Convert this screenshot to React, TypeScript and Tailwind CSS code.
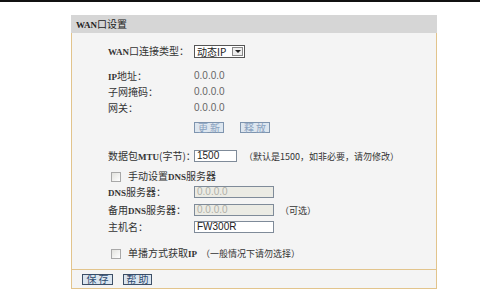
import React from 'react'

const cjk = { fontFamily: '"Noto Sans CJK SC", "Liberation Sans", sans-serif' }
const latin = { fontFamily: '"Liberation Sans", Arial, sans-serif' }
const serif = { fontFamily: '"Liberation Serif", "Times New Roman", serif' }

// Latin runs inside the Chinese labels look like a small bitmap face in the original
function Mixed({ text }: { text: string }) {
  return (
    <>
      {text.split(/([A-Za-z]+)/).map((part, i) =>
        /^[A-Za-z]+$/.test(part) ? (
          <span key={i} style={serif} className="text-[9px] font-bold">
            {part}
          </span>
        ) : (
          <span key={i}>{part}</span>
        ),
      )}
    </>
  )
}

function Label({ text }: { text: string }) {
  return (
    <div className="w-[86px] shrink-0 whitespace-nowrap text-[10px] leading-none text-[#333]">
      <Mixed text={text} />
    </div>
  )
}

function TextBox({ value, disabled, width = 'w-[80px]' }: { value: string; disabled?: boolean; width?: string }) {
  return (
    <div
      style={latin}
      className={
        width +
        ' h-[12px] whitespace-nowrap border border-[#7f8b99] px-[2px] text-[10px] leading-[10px] ' +
        (disabled ? 'bg-[#ebebe4] text-[#b0b0a8]' : 'bg-white text-[#222]')
      }
    >
      {value}
    </div>
  )
}

function CheckBox() {
  return <div className="h-[10px] w-[10px] shrink-0 border border-[#a8a8a8] bg-gradient-to-br from-[#e2e2de] to-white" />
}

function Btn({ text, muted }: { text: string; muted?: boolean }) {
  return (
    <div
      className={
        'flex h-[11px] items-center justify-center whitespace-nowrap border pl-[2px] text-[10px] leading-none tracking-[2px] ' +
        (muted
          ? 'border-[#7e94ae] bg-[#dde6ef] text-[#8aa2c0]'
          : 'border-[#3d4f66] bg-[#dbe5ef] text-[#2e4a6e]')
      }
    >
      {text}
    </div>
  )
}

function Value({ v }: { v: string }) {
  return (
    <div style={latin} className="text-[10px] leading-none text-[#666]">
      {v}
    </div>
  )
}

export default function App() {
  return (
    <div style={cjk} className="h-[300px] w-[480px] overflow-hidden bg-white">
      <div className="h-[2px] bg-[#111]" />
      <div className="ml-[71px] mt-[13px] w-[366px]">
        <div className="h-[18px] whitespace-nowrap bg-[#d6d6d6] pl-[5px] text-[10px] leading-[18px] text-[#222]">
          <Mixed text="WAN口设置" />
        </div>
        <div className="border-x border-b border-[#e2c48c] bg-[#f4f4f4]">
          <div className="flex flex-col pb-[9px] pl-[36px] pt-[12px]">
            <div className="flex h-[13px] items-center">
              <Label text="WAN口连接类型：" />
              <div className="flex h-[13px] w-[51px] items-stretch border border-[#555] bg-white">
                <div className="flex-1 whitespace-nowrap pl-[2px] text-[10px] leading-[11px] text-[#222]">动态IP</div>
                <div className="my-[1px] mr-[1px] flex w-[11px] items-center justify-center border border-[#888] bg-[#eee]">
                  <div className="h-0 w-0 border-x-[3px] border-t-[3px] border-x-transparent border-t-[#222]" />
                </div>
              </div>
            </div>

            <div className="mt-[10px] flex h-[16px] items-center">
              <Label text="IP地址：" />
              <Value v="0.0.0.0" />
            </div>
            <div className="flex h-[16px] items-center">
              <Label text="子网掩码：" />
              <Value v="0.0.0.0" />
            </div>
            <div className="flex h-[16px] items-center">
              <Label text="网关：" />
              <Value v="0.0.0.0" />
            </div>
            <div className="mt-[6px] flex h-[11px] items-center">
              <div className="w-[86px] shrink-0" />
              <div className="w-[30px]">
                <Btn text="更新" muted />
              </div>
              <div className="ml-[16px] w-[30px]">
                <Btn text="释放" muted />
              </div>
            </div>

            <div className="mt-[17px] flex h-[12px] items-center">
              <Label text="数据包MTU(字节)：" />
              <TextBox value="1500" width="w-[43px]" />
              <div className="ml-[7px] whitespace-nowrap text-[9px] leading-none text-[#333]">（默认是1500，如非必要，请勿修改）</div>
            </div>

            <div className="mt-[8px] flex h-[13px] items-center pl-[3px]">
              <CheckBox />
              <div className="ml-[7px] whitespace-nowrap text-[10px] leading-none text-[#333]">
                <Mixed text="手动设置DNS服务器" />
              </div>
            </div>
            <div className="mt-[3px] flex h-[12px] items-center">
              <Label text="DNS服务器：" />
              <TextBox value="0.0.0.0" disabled />
            </div>
            <div className="mt-[6px] flex h-[12px] items-center">
              <Label text="备用DNS服务器：" />
              <TextBox value="0.0.0.0" disabled />
              <div className="ml-[6px] whitespace-nowrap text-[9px] leading-none text-[#333]">（可选）</div>
            </div>
            <div className="mt-[5px] flex h-[12px] items-center">
              <Label text="主机名：" />
              <TextBox value="FW300R" />
            </div>

            <div className="mt-[14px] flex h-[13px] items-center pl-[3px]">
              <CheckBox />
              <div className="ml-[7px] whitespace-nowrap text-[10px] leading-none text-[#333]">
                <Mixed text="单播方式获取IP" />
              </div>
              <div className="ml-[4px] whitespace-nowrap text-[9px] leading-none text-[#333]">（一般情况下请勿选择）</div>
            </div>
          </div>
          <div className="flex h-[19px] items-center gap-[10px] border-t border-[#e2c48c] pl-[10px]">
            <div className="w-[31px]">
              <Btn text="保存" />
            </div>
            <div className="w-[29px]">
              <Btn text="帮助" />
            </div>
          </div>
        </div>
      </div>
    </div>
  )
}
